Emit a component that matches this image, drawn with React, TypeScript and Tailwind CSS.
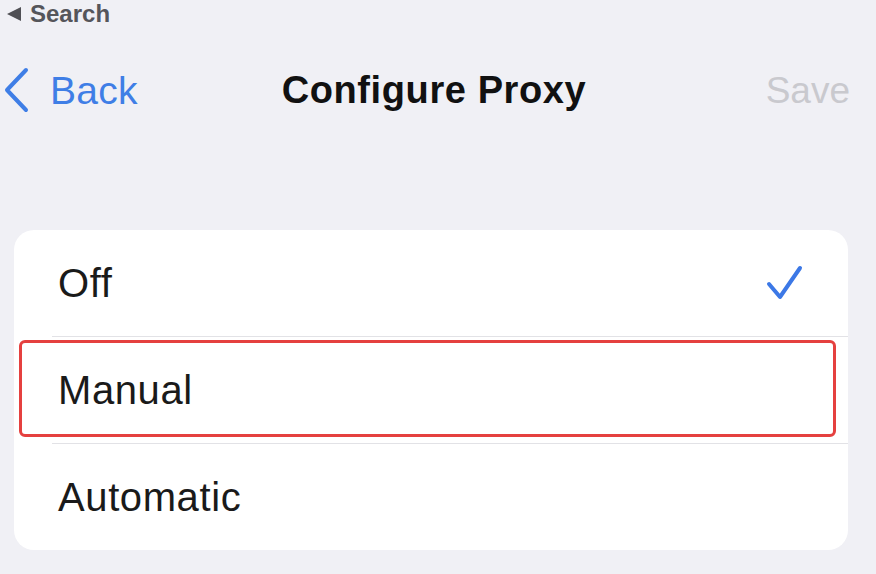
import React from "react";

const options = [
  { label: "Off", checked: true, highlight: false },
  { label: "Manual", checked: false, highlight: true },
  { label: "Automatic", checked: false, highlight: false },
];

function Checkmark() {
  return (
    <svg width="37" height="36" viewBox="0 0 37 36" fill="none">
      <path
        d="M3 19 L14 32 L34 3"
        stroke="#3c78e6"
        strokeWidth="4"
        strokeLinecap="round"
        strokeLinejoin="round"
      />
    </svg>
  );
}

export default function App() {
  return (
    <div
      className="w-[876px] h-[574px] overflow-hidden bg-[#f0f0f5] flex flex-col"
      style={{ fontFamily: '"Liberation Sans", Arial, sans-serif' }}
    >
      {/* status bar back link */}
      <div className="h-[28px] flex items-center pl-[6px] gap-[8px] text-[#55555a]">
        <svg width="16" height="16" viewBox="0 0 16 16">
          <path d="M15 1 L15 15 L1 8 Z" fill="#505055" />
        </svg>
        <span className="text-[24px] font-bold leading-none">Search</span>
      </div>

      {/* nav bar */}
      <div className="h-[124px] grid grid-cols-[1fr_auto_1fr] items-center">
        <div className="flex items-center pl-[3px] gap-[21px] text-[#3f7ee6]">
          <svg width="26" height="46" viewBox="0 0 26 46" fill="none">
            <path
              d="M23 3 L4 23 L23 43"
              stroke="#3f7ee6"
              strokeWidth="4"
              strokeLinecap="round"
              strokeLinejoin="round"
            />
          </svg>
          <span className="text-[39px] leading-none tracking-[0.3px]">Back</span>
        </div>
        <div className="text-[38px] font-bold leading-none text-[#111] tracking-[0.6px] pr-[8px]">
          Configure Proxy
        </div>
        <div className="flex justify-end pr-[26px]">
          <span className="text-[37px] leading-none text-[#c9c9ce]">Save</span>
        </div>
      </div>

      {/* options card */}
      <div className="mt-[78px] ml-[14px] w-[834px] rounded-[20px] bg-white flex flex-col">
        {options.map((opt, i) => (
          <div key={opt.label} className="relative">
            {i > 0 && <div className="ml-[38px] h-px bg-[#e2e2e6]" />}
            <div className="h-[106px] flex items-center justify-between pl-[44px] pr-[45px]">
              <span className="text-[40px] leading-none tracking-[0.6px] text-[#1a1a1a]">{opt.label}</span>
              {opt.checked && <Checkmark />}
            </div>
            {opt.highlight && (
              <div className="absolute left-[5px] right-[12px] top-[4px] bottom-[6px] border-[3px] border-[#e5403f] rounded-[6px]" />
            )}
          </div>
        ))}
      </div>
    </div>
  );
}
